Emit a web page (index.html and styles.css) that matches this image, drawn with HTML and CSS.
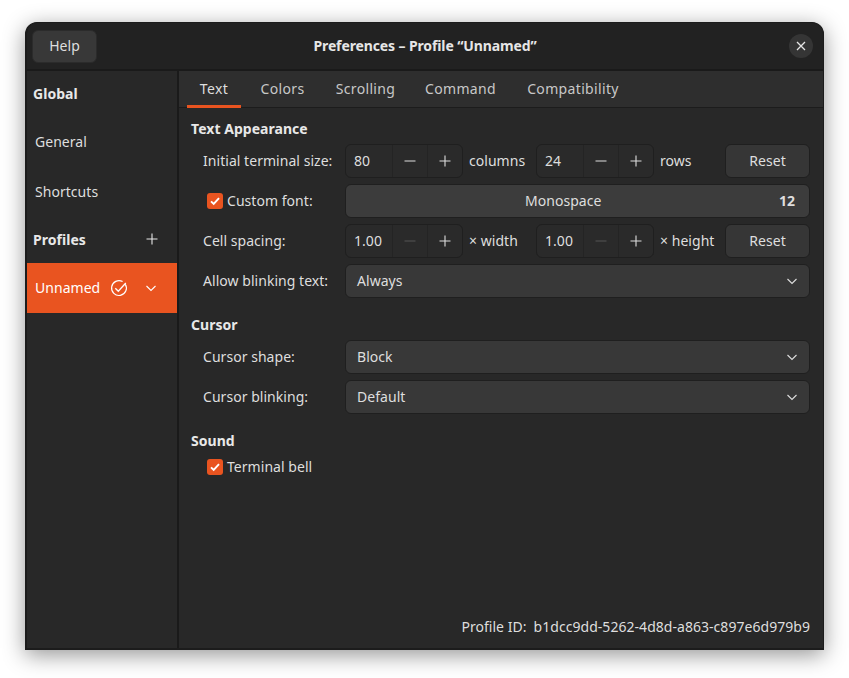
FILE: index.html
```html
<!DOCTYPE html>
<html lang="en">
<head>
<meta charset="utf-8">
<title>Preferences</title>
<link rel="stylesheet" href="styles.css">
</head>
<body>
<svg class="defs" width="0" height="0" aria-hidden="true">
  <symbol id="i-plus" viewBox="0 0 16 16"><path d="M8 2.5v11M2.5 8h11" fill="none" stroke="currentColor" stroke-width="1.1"/></symbol>
  <symbol id="i-minus" viewBox="0 0 16 16"><path d="M2.5 8h11" fill="none" stroke="currentColor" stroke-width="1.1"/></symbol>
  <symbol id="i-chev" viewBox="0 0 16 16"><path d="M3.5 6l4.5 4.5L12.5 6" fill="none" stroke="currentColor" stroke-width="1.1"/></symbol>
  <symbol id="i-check" viewBox="0 0 16 16"><path d="M4 8.3l2.7 2.7L12 5.2" fill="none" stroke="currentColor" stroke-width="1.9"/></symbol>
</svg>
<div class="window">
  <header class="titlebar">
    <button class="btn help">Help</button>
    <div class="title">Preferences – Profile “Unnamed”</div>
    <button class="close" aria-label="Close"><svg width="10" height="10" viewBox="0 0 10 10"><path d="M1 1l8 8M9 1l-8 8" fill="none" stroke="currentColor" stroke-width="1.3"/></svg></button>
  </header>
  <div class="body">
    <nav class="sidebar">
      <div class="side-head first">Global</div>
      <div class="side-item">General</div>
      <div class="side-item">Shortcuts</div>
      <div class="side-head profiles">Profiles <svg class="ico" width="16" height="16"><use href="#i-plus"/></svg></div>
      <div class="side-item active">
        <span class="profile-name">Unnamed</span>
        <svg class="default-mark" width="18" height="18" viewBox="0 0 18 18"><path d="M15.3 5.2A7.4 7.4 0 1 1 12.6 2.6" fill="none" stroke="currentColor" stroke-width="1.2"/><path d="M5.3 9.2l3 3L15.8 4" fill="none" stroke="currentColor" stroke-width="1.3"/></svg>
        <svg class="ico chev-side" width="16" height="16"><use href="#i-chev"/></svg>
      </div>
    </nav>
    <main class="content">
      <div class="tabs">
        <div class="tab current">Text</div>
        <div class="tab">Colors</div>
        <div class="tab">Scrolling</div>
        <div class="tab">Command</div>
        <div class="tab">Compatibility</div>
      </div>
      <div class="page">
        <h2 class="heading">Text Appearance</h2>
        <div class="form">
          <div class="label">Initial terminal size:</div>
          <div class="spin"><span class="val">80</span><span class="step"><svg class="ico" width="16" height="16"><use href="#i-minus"/></svg></span><span class="step"><svg class="ico" width="16" height="16"><use href="#i-plus"/></svg></span></div>
          <div class="unit">columns</div>
          <div class="spin"><span class="val">24</span><span class="step"><svg class="ico" width="16" height="16"><use href="#i-minus"/></svg></span><span class="step"><svg class="ico" width="16" height="16"><use href="#i-plus"/></svg></span></div>
          <div class="unit">rows</div>
          <button class="btn reset">Reset</button>

          <div class="label check-label"><span class="checkbox"><svg width="16" height="16"><use href="#i-check"/></svg></span>Custom font:</div>
          <div class="fontbtn wide"><span class="font-name">Monospace</span><span class="font-size">12</span></div>

          <div class="label">Cell spacing:</div>
          <div class="spin"><span class="val">1.00</span><span class="step off"><svg class="ico" width="16" height="16"><use href="#i-minus"/></svg></span><span class="step"><svg class="ico" width="16" height="16"><use href="#i-plus"/></svg></span></div>
          <div class="unit">× width</div>
          <div class="spin"><span class="val">1.00</span><span class="step off"><svg class="ico" width="16" height="16"><use href="#i-minus"/></svg></span><span class="step"><svg class="ico" width="16" height="16"><use href="#i-plus"/></svg></span></div>
          <div class="unit">× height</div>
          <button class="btn reset">Reset</button>

          <div class="label">Allow blinking text:</div>
          <div class="combo wide">Always<svg class="ico" width="16" height="16"><use href="#i-chev"/></svg></div>
        </div>
        <h2 class="heading cursor">Cursor</h2>
        <div class="form">
          <div class="label">Cursor shape:</div>
          <div class="combo wide">Block<svg class="ico" width="16" height="16"><use href="#i-chev"/></svg></div>
          <div class="label">Cursor blinking:</div>
          <div class="combo wide">Default<svg class="ico" width="16" height="16"><use href="#i-chev"/></svg></div>
        </div>
        <h2 class="heading sound">Sound</h2>
        <div class="bell"><span class="checkbox"><svg width="16" height="16"><use href="#i-check"/></svg></span>Terminal bell</div>
        <div class="footer"><span>Profile ID:</span><span>b1dcc9dd-5262-4d8d-a863-c897e6d979b9</span></div>
      </div>
    </main>
  </div>
</div>
</body>
</html>
```

FILE: styles.css
```css
* { box-sizing: border-box; }
html, body { margin: 0; padding: 0; background: #fff; }
body {
  width: 849px;
  height: 678px;
  padding: 22px 25px 28px;
  overflow: hidden;
  font-family: "Noto Sans", "Liberation Sans", sans-serif;
  font-size: 14px;
  letter-spacing: .04px;
  color: #dedede;
}
.defs { position: absolute; }
.ico { display: block; flex: none; }

.window {
  width: 799px;
  height: 628px;
  display: flex;
  flex-direction: column;
  background: #1a1a1a;
  border: 2px solid #1c1c1c;
  border-width: 1px 1px 2px 2px;
  border-radius: 12px 12px 0 0;
  box-shadow: 0 5px 22px rgba(0, 0, 0, .42);
  overflow: hidden;
}
.titlebar {
  flex: none;
  height: 46px;
  position: relative;
  display: flex;
  align-items: center;
  padding: 0 10px 0 5px;
  background: #222;
  justify-content: space-between;
  margin-bottom: 2px;
}
.title {
  position: absolute;
  left: 0;
  right: 0;
  padding-bottom: 2px;
  text-align: center;
  font-weight: 700;
  font-size: 14px;
  letter-spacing: -.12px;
  color: #e6e6e6;
  pointer-events: none;
}
.btn {
  font: inherit;
  letter-spacing: inherit;
  color: inherit;
  background: #363636;
  border: 1px solid #1f1f1f;
  border-radius: 6px;
  padding: 0 0 2px;
}
.help { width: 65px; height: 33px; background: #383838; border-color: #2b2b2b; }
.close {
  width: 24px;
  height: 24px;
  padding: 0;
  border: 0;
  border-radius: 50%;
  background: #353535;
  color: #e6e6e6;
  display: flex;
  align-items: center;
  justify-content: center;
  position: relative;
}

.body { flex: 1; display: flex; min-height: 0; gap: 2px; }
.sidebar { flex: none; width: 150px; background: #282828; }
.side-head {
  height: 46px;
  display: flex;
  align-items: center;
  justify-content: space-between;
  padding: 0 17px 2px 6px;
  font-weight: 700;
  color: #e8e8e8;
}
.side-item { height: 50px; display: flex; align-items: center; padding: 0 0 2px 8px; }
.side-item.active { background: #e95420; color: #fff; }
.profile-name { width: 75px; }
.default-mark { flex: none; margin-top: 2px; }
.chev-side { margin: 2px 0 0 15px; }

.content { flex: 1; display: flex; flex-direction: column; background: #282828; min-width: 0; }
.tabs {
  flex: none;
  height: 37px;
  display: grid;
  grid-template-columns: 54px 71px 83px 95px 118px;
  column-gap: 6px;
  padding-left: 8px;
  background: #2e2e2e;
  border-bottom: 1px solid #1c1c1c;
}
.tab {
  height: 37px;
  padding-bottom: 3px;
  display: flex;
  align-items: center;
  justify-content: center;
  color: #c8c8c8;
  letter-spacing: .35px;
}
.tab.current { color: #dedede; box-shadow: inset 0 -3px 0 #e95420; }

.page { flex: 1; position: relative; padding: 12px 14px 0 12px; display: flex; flex-direction: column; }
.heading { margin: 0; height: 20px; padding-bottom: 2px; line-height: 18px; font-size: 14px; font-weight: 700; color: #e8e8e8; }
.heading.cursor { margin-top: 18px; }
.heading.sound { margin-top: 18px; }

.form {
  margin-top: 4px;
  display: grid;
  grid-template-columns: 142px 118px 73px 118px 71px 85px;
  grid-auto-rows: 34px;
  row-gap: 6px;
  padding-left: 12px;
}
.label, .unit { display: flex; align-items: center; padding-bottom: 2px; }
.unit { padding-left: 6px; }
.label { grid-column: 1; }
.wide { grid-column: 2 / 7; }
.check-label { padding-left: 4px; }

.spin {
  display: grid;
  grid-template-columns: 46px 35px 1fr;
  border: 1px solid #1f1f1f;
  border-radius: 6px;
  background: #2a2a2a;
}
.val { display: flex; align-items: center; padding: 0 0 2px 8px; }
.step { display: flex; align-items: center; justify-content: center; padding-right: 1px; border-left: 1px solid #242424; }
.step.off { color: #555; }
.reset { width: 85px; }

.fontbtn {
  position: relative;
  display: flex;
  align-items: center;
  justify-content: space-between;
  padding: 0 14px 2px 179px;
  background: #3c3c3c;
  border: 1px solid #1f1f1f;
  border-radius: 6px;
}
.font-size { font-weight: 700; }
.combo {
  display: flex;
  align-items: center;
  justify-content: space-between;
  padding: 0 9px 2px 11px;
  background: #383838;
  border: 1px solid #1f1f1f;
  border-radius: 6px;
}
.combo .ico { margin-top: 2px; }
.checkbox {
  flex: none;
  width: 16px;
  height: 16px;
  margin: 2px 4px 0 0;
  border-radius: 3px;
  background: #e95420;
  color: #fff;
  display: block;
}
.checkbox svg { display: block; }
.bell { margin-top: 5px; padding: 0 0 2px 16px; height: 20px; display: flex; align-items: center; }
.footer {
  position: absolute;
  right: 13px;
  bottom: 12px;
  display: flex;
  gap: 7px;
}
```
